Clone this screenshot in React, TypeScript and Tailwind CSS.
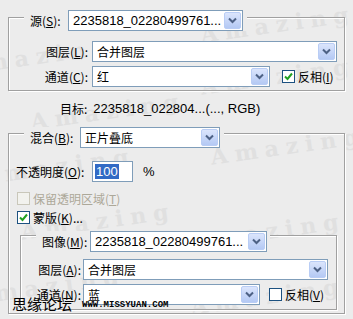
import React from 'react';

const cjk = { fontFamily: '"Noto Sans CJK SC", "Liberation Sans", sans-serif' };
const latin = { fontFamily: '"Liberation Sans", "Noto Sans CJK SC", sans-serif' };

function Arrow() {
    return (
        <div className="m-px w-[17px] flex items-center justify-center rounded-[2px] border border-[#b9cdf5] bg-gradient-to-b from-[#dbe5fc] to-[#b4c9f4]">
            <svg width="9" height="7" viewBox="0 0 9 7">
                <path d="M1 1.5 L4.5 5 L8 1.5" fill="none" stroke="#4d6185" strokeWidth="2" />
            </svg>
        </div>
    );
}

function Select({ w, text, mono = false }: { w: string; text: string; mono?: boolean }) {
    return (
        <div className={`${w} h-[21px] flex border border-[#7f9db9] bg-white`}>
            <div
                className={`flex-1 flex items-center pl-[4px] text-black whitespace-nowrap overflow-hidden ${mono ? 'text-[13px]' : 'text-[12px]'}`}
                style={mono ? latin : cjk}
            >
                {text}
            </div>
            <Arrow />
        </div>
    );
}

function Check({ checked = false, disabled = false }: { checked?: boolean; disabled?: boolean }) {
    return (
        <div
            className={`shrink-0 w-[13px] h-[13px] flex items-center justify-center border ${disabled ? 'border-[#c9c7ba] bg-[#f2f2ee]' : 'border-[#1c5180] bg-white'}`}
        >
            {checked && (
                <svg width="9" height="9" viewBox="0 0 9 9">
                    <path d="M1 4.5 L3.5 7 L8 1.5" fill="none" stroke="#21a121" strokeWidth="2" />
                </svg>
            )}
        </div>
    );
}

function Label({ children, u, w, left = false }: { children: string; u: string; w: string; left?: boolean }) {
    return (
        <span
            className={`${w} ${left ? 'text-left' : 'text-right'} shrink-0 text-[12px] leading-[14px] text-black whitespace-nowrap`}
            style={cjk}
        >
            {children}(<span className="underline">{u}</span>):
        </span>
    );
}

const groupBox = 'border border-[#a0a0a0] shadow-[inset_1px_1px_0_#fff,1px_1px_0_#fff]';

const marks = [
    { x: -40, y: 40 },
    { x: 200, y: 8 },
    { x: 30, y: 95 },
    { x: 200, y: 60 },
    { x: -20, y: 150 },
    { x: 210, y: 130 },
    { x: 20, y: 205 },
    { x: 190, y: 215 },
    { x: -30, y: 270 },
    { x: 190, y: 280 },
];

export default function App() {
    return (
        <div className="relative w-[353px] h-[319px] bg-[#ececec] overflow-hidden pt-[17px]">
            {/* faint Amazing watermark */}
            <div className="absolute inset-0 pointer-events-none">
                {marks.map((m, i) => (
                    <span
                        key={i}
                        className="absolute text-[22px] font-bold tracking-[7px] text-[#e0e0e0] -rotate-[8deg]"
                        style={{ left: m.x, top: m.y, fontFamily: '"DejaVu Serif", serif' }}
                    >
                        Amazing
                    </span>
                ))}
            </div>

            <div className="relative">
                {/* source group */}
                <div className={`ml-[8px] w-[337px] h-[74px] ${groupBox}`}>
                    <div className="-mt-[8px] ml-[15px] w-fit h-[21px] flex items-center bg-[#ececec] pl-[6px] pr-[4px]">
                        <Label u="S" w="w-[38px]" left>源</Label>
                        <Select w="w-[175px]" text="2235818_02280499761..." mono />
                    </div>
                    <div className="mt-[10px] h-[21px] flex items-center">
                        <Label u="L" w="w-[79px]">图层</Label>
                        <div className="ml-[4px]">
                            <Select w="w-[245px]" text="合并图层" />
                        </div>
                    </div>
                    <div className="mt-[4px] h-[21px] flex items-center">
                        <Label u="C" w="w-[79px]">通道</Label>
                        <div className="ml-[4px]">
                            <Select w="w-[178px]" text="红" />
                        </div>
                        <div className="ml-[12px] flex items-center gap-[3px]">
                            <Check checked />
                            <span className="text-[12px] leading-[14px] text-black whitespace-nowrap" style={cjk}>
                                反相(<span className="underline">I</span>)
                            </span>
                        </div>
                    </div>
                </div>

                {/* target */}
                <div className="mt-[11px] h-[14px] pl-[60px] flex items-center gap-[6px] text-black">
                    <span className="text-[12px] leading-[14px]" style={cjk}>目标:</span>
                    <span className="text-[13px] leading-[14px]" style={latin}>2235818_022804...(..., RGB)</span>
                </div>

                {/* blend group */}
                <div className={`mt-[17px] ml-[8px] w-[337px] h-[181px] ${groupBox}`}>
                    <div className="-mt-[7px] ml-[15px] w-fit h-[21px] flex items-center bg-[#ececec] pl-[6px] pr-[4px]">
                        <Label u="B" w="w-[50px]" left>混合</Label>
                        <Select w="w-[140px]" text="正片叠底" />
                    </div>
                    <div className="mt-[13px] h-[21px] pl-[7px] flex items-center">
                        <Label u="O" w="w-[76px]" left>不透明度</Label>
                        <div className="w-[41px] h-[21px] flex items-center border border-[#7f9db9] bg-white pl-[2px]">
                            <span className="bg-[#316ac5] text-white text-[13px] leading-[15px] px-px" style={latin}>
                                100
                            </span>
                        </div>
                        <span className="ml-[10px] text-[13px] leading-[14px] text-black" style={latin}>%</span>
                    </div>
                    <div className="mt-[10px] h-[13px] pl-[8px] flex items-center gap-[3px]">
                        <Check disabled />
                        <span className="text-[12px] leading-[14px] text-[#aca899] whitespace-nowrap" style={cjk}>
                            保留透明区域(<span className="underline">T</span>)
                        </span>
                    </div>
                    <div className="mt-[6px] h-[13px] pl-[8px] flex items-center gap-[3px]">
                        <Check checked />
                        <span className="text-[12px] leading-[14px] text-black whitespace-nowrap" style={cjk}>
                            蒙版(<span className="underline">K</span>)...
                        </span>
                    </div>

                    {/* mask group */}
                    <div className={`mt-[11px] ml-[11px] w-[317px] h-[75px] ${groupBox}`}>
                        <div className="-mt-[5px] ml-[15px] w-fit h-[21px] flex items-center bg-[#ececec] pl-[6px] pr-[3px]">
                            <Label u="M" w="w-[48px]" left>图像</Label>
                            <Select w="w-[177px]" text="2235818_02280499761..." mono />
                        </div>
                        <div className="mt-[7px] h-[21px] flex items-center">
                            <Label u="A" w="w-[60px]">图层</Label>
                            <div className="ml-[2px]">
                                <Select w="w-[245px]" text="合并图层" />
                            </div>
                        </div>
                        <div className="mt-[4px] h-[21px] flex items-center">
                            <Label u="N" w="w-[60px]">通道</Label>
                            <div className="ml-[2px]">
                                <Select w="w-[177px]" text="蓝" />
                            </div>
                            <div className="ml-[9px] flex items-center gap-[3px]">
                                <Check />
                                <span className="text-[12px] leading-[14px] text-black whitespace-nowrap" style={cjk}>
                                    反相(<span className="underline">V</span>)
                                </span>
                            </div>
                        </div>
                    </div>
                </div>
            </div>

            {/* site watermark */}
            <div className="absolute left-[12px] top-[295px] flex items-end gap-[10px]">
                <span className="text-[15px] leading-[17px] text-black" style={cjk}>思缘论坛</span>
                <span className="text-[9px] leading-[13px] font-bold text-black uppercase" style={{ fontFamily: '"Liberation Mono", monospace' }}>
                    www.missyuan.com
                </span>
            </div>
        </div>
    );
}
